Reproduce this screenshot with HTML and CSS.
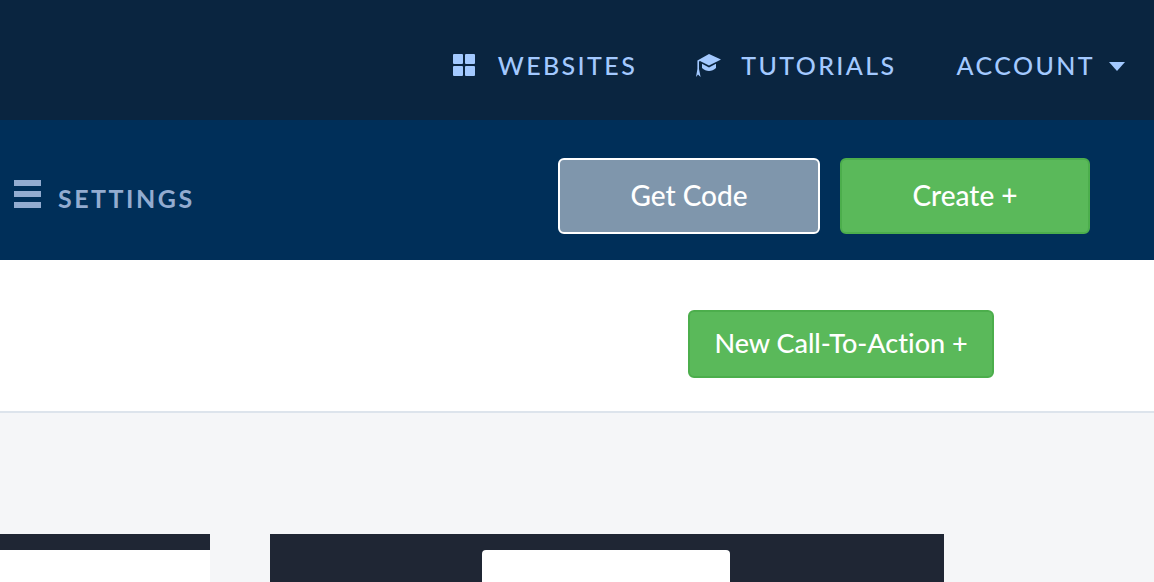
FILE: index.html
```html
<!DOCTYPE html>
<html lang="en">
<head>
    <meta charset="UTF-8">
    <meta name="viewport" content="width=device-width, initial-scale=1.0">
    <title>Call-To-Actions</title>
    <link rel="stylesheet" href="styles.css">
</head>
<body>
    <!-- Top nav -->
    <nav class="top-nav">
        <a class="nav-link nav-websites" href="#">
            <svg class="nav-icon" width="22" height="22" viewBox="0 0 22 22">
                <rect x="0" y="0" width="10" height="10" rx="1"/>
                <rect x="12" y="0" width="10" height="10" rx="1"/>
                <rect x="0" y="12" width="10" height="10" rx="1"/>
                <rect x="12" y="12" width="10" height="10" rx="1"/>
            </svg>
            WEBSITES
        </a>
        <a class="nav-link nav-tutorials" href="#">
            <svg class="nav-icon" width="26" height="24" viewBox="0 0 26 24">
                <path d="M14 1 L26 6.5 L14 12.5 L5 8 L4 8.6 L4 16 L5.6 24 L3 21.6 L1 24 L2.4 16 L2.4 7.6 Z"/>
                <path d="M7 10.8 L14 14.4 L21 10.8 L21 15 C19 16.8 16.5 18 14 18 C11.5 18 9 16.8 7 15 Z"/>
            </svg>
            TUTORIALS
        </a>
        <a class="nav-link nav-account" href="#">
            ACCOUNT
            <span class="caret"></span>
        </a>
    </nav>

    <!-- Settings bar -->
    <div class="sub-bar">
        <a class="settings" href="#">
            <span class="burger"><i></i><i></i><i></i></span>
            <span class="settings-label">SETTINGS</span>
        </a>
        <div class="sub-actions">
            <button class="btn btn-code">Get Code</button>
            <button class="btn btn-green btn-create">Create +</button>
        </div>
    </div>

    <!-- Toolbar -->
    <div class="toolbar">
        <button class="btn btn-green btn-new">New Call-To-Action +</button>
    </div>

    <!-- Cards -->
    <main class="cards">
        <div class="card card-left"><div class="card-sheet"></div></div>
        <div class="card card-main"><div class="card-sheet"></div></div>
    </main>
</body>
</html>
```

FILE: styles.css
```css
html, body {
    height: 582px;
    overflow: hidden;
}

body {
    font-family: 'Lato', 'Open Sans', sans-serif;
    font-variant-ligatures: none;
    margin: 0;
    padding: 0;
    background: #f5f6f8;
}

.top-nav {
    height: 120px;
    box-sizing: border-box;
    background: #0a2540;
    display: flex;
    justify-content: flex-end;
    align-items: center;
    padding: 9px 29px 0 0;
}

.nav-link {
    display: flex;
    align-items: center;
    color: #a3c9ff;
    font-size: 25px;
    font-weight: 500;
    letter-spacing: 2.4px;
    text-decoration: none;
}

.nav-icon {
    fill: #a3c9ff;
    flex: none;
}

.nav-websites .nav-icon {
    margin-right: 23px;
}

.nav-tutorials {
    margin-left: 58px;
}

.nav-tutorials .nav-icon {
    margin-right: 20px;
}

.nav-account {
    margin-left: 60px;
}

.caret {
    width: 0;
    height: 0;
    margin-left: 14px;
    margin-top: 3px;
    border-left: 8.5px solid transparent;
    border-right: 8.5px solid transparent;
    border-top: 9px solid #a3c9ff;
}

.sub-bar {
    height: 140px;
    box-sizing: border-box;
    background: #002f59;
    display: flex;
    justify-content: space-between;
    align-items: center;
    padding: 12px 64px 0 14px;
}

.settings {
    display: flex;
    align-items: center;
    color: #93acd0;
    text-decoration: none;
    margin-top: 4px;
}

.burger {
    display: flex;
    flex-direction: column;
    gap: 5px;
    width: 27px;
    margin-right: 17px;
    margin-top: -9px;
}

.burger i {
    display: block;
    height: 6px;
    background: #93acd0;
}

.settings-label {
    font-size: 25px;
    font-weight: 700;
    letter-spacing: 2.5px;
}

.sub-actions {
    display: flex;
    gap: 20px;
}

.btn {
    font-family: 'Lato', 'Open Sans', sans-serif;
    font-variant-ligatures: none;
    color: #fff;
    font-size: 28px;
    font-weight: 500;
    border-radius: 6px;
    box-sizing: border-box;
    cursor: pointer;
    padding: 0 0 2px;
}

.btn-green {
    background: #5ab95a;
    border: 2px solid #4cae4c;
}

.btn-code {
    width: 262px;
    height: 76px;
    background: #7f96ac;
    border: 2px solid #fff;
}

.btn-create {
    width: 250px;
    height: 76px;
}

.toolbar {
    height: 153px;
    box-sizing: border-box;
    background: #fff;
    border-bottom: 2px solid #dde4ec;
    display: flex;
    justify-content: flex-end;
    align-items: flex-start;
    padding: 50px 160px 0 0;
}

.btn-new {
    width: 306px;
    height: 68px;
    font-size: 27px;
    padding-bottom: 4px;
}

.cards {
    display: flex;
    gap: 60px;
    padding-top: 121px;
}

.card {
    background: #1f2634;
    height: 48px;
    padding-top: 16px;
    box-sizing: border-box;
}

.card-left {
    width: 210px;
}

.card-left .card-sheet {
    height: 100%;
    background: #fff;
}

.card-main {
    width: 674px;
    display: flex;
    padding-left: 212px;
}

.card-main .card-sheet {
    width: 248px;
    flex: none;
    height: 100%;
    background: #fff;
    border-radius: 4px 4px 0 0;
}
```
